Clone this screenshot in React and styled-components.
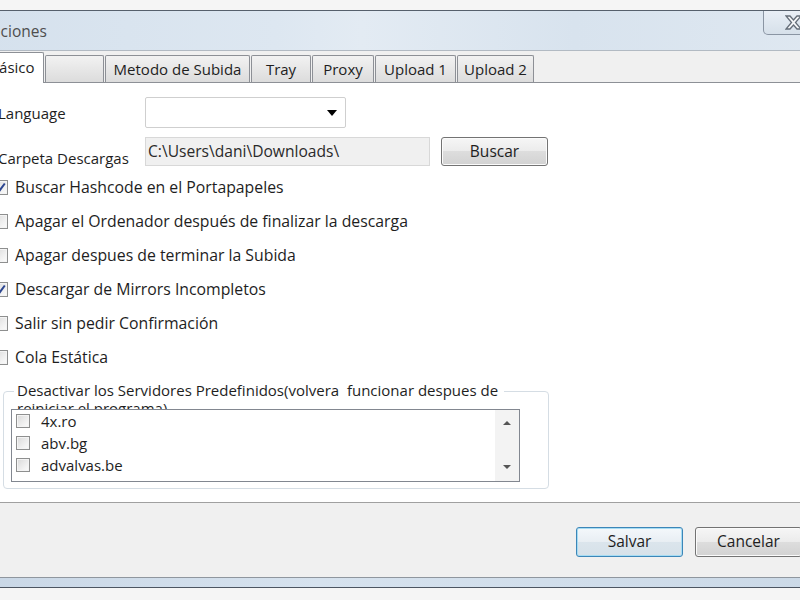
import React from 'react';
import styled, { createGlobalStyle } from 'styled-components';

const GlobalStyle = createGlobalStyle`
  html, body {
    margin: 0;
    padding: 0;
    overflow: hidden;
    background: #f6f6f6;
  }
  body {
    font-family: 'Open Sans', 'Noto Sans', sans-serif;
    font-size: 15px;
    color: #1e1e1e;
  }
`;

const Screen = styled.div`
  width: 800px;
  height: 600px;
  overflow: hidden;
  padding-top: 10px;
  box-sizing: border-box;
  background: #f5f5f5;
`;

const Window = styled.div`
  margin: 0 -30px 0 -22px;
  border-top: 1px solid #56606c;
  display: flex;
  flex-direction: column;
`;

const TitleBar = styled.div`
  height: 39px;
  display: flex;
  justify-content: space-between;
  align-items: flex-start;
  background: linear-gradient(to right, #d5e1ed, #dde7f1 35%, #e3ebf3 45%, #d8e3ee 70%, #dfe8f1);
  border-bottom: 1px solid #b2bac3;
`;

const Title = styled.div`
  padding-left: 1px;
  line-height: 40px;
  font-size: 15.5px;
  color: #4e4e4e;
`;

const CloseButton = styled.div`
  width: 60px;
  height: 24px;
  margin-right: 7px;
  box-sizing: border-box;
  border: 1px solid #8a95a3;
  border-top: none;
  border-radius: 0 0 5px 5px;
  background: linear-gradient(#e9eff6, #d6e0ea);
  display: flex;
  align-items: center;
  justify-content: center;
`;

const Client = styled.div`
  background: #f0f0f0;
`;

const TabStrip = styled.div`
  position: relative;
  z-index: 1;
  height: 31px;
  display: flex;
  align-items: flex-end;
  padding-left: 2px;
`;

const Tab = styled.div`
  box-sizing: border-box;
  width: ${p => p.$w}px;
  height: ${p => (p.$active ? 31 : 27)}px;
  margin-left: ${p => (p.$first ? 0 : 1)}px;
  margin-bottom: ${p => (p.$active ? -1 : 0)}px;
  border: 1px solid #8d9096;
  border-bottom: none;
  border-radius: 2px 2px 0 0;
  background: ${p => (p.$active ? '#ffffff' : 'linear-gradient(#f2f2f2, #e7e7e7 50%, #dcdcdc)')};
  display: flex;
  align-items: center;
  justify-content: center;
  padding-bottom: ${p => (p.$active ? 2 : 0)}px;
  white-space: nowrap;
`;

const Panel = styled.div`
  box-sizing: border-box;
  height: 421px;
  background: #ffffff;
  border-top: 1px solid #8d9096;
  border-bottom: 1px solid #a0a0a0;
  padding: 14px 0 0 15px;
`;

const Row = styled.div`
  display: flex;
  align-items: ${p => p.$align || 'center'};
  height: ${p => p.$h}px;
  margin-top: ${p => p.$mt || 0}px;
`;

const FieldLabel = styled.div`
  width: 147px;
  flex-shrink: 0;
  margin-left: 5px;
  line-height: 20px;
  margin-bottom: ${p => p.$mb || 0}px;
`;

const Combo = styled.div`
  width: 201px;
  height: 31px;
  box-sizing: border-box;
  border: 1px solid #cfcfcf;
  border-radius: 2px;
  background: #fff;
  display: flex;
  align-items: center;
  justify-content: flex-end;
  padding-right: 8px;
`;

const ComboArrow = styled.span`
  width: 0;
  height: 0;
  border-left: 5px solid transparent;
  border-right: 5px solid transparent;
  border-top: 6px solid #000;
`;

const PathInput = styled.div`
  width: 285px;
  height: 29px;
  box-sizing: border-box;
  border: 1px solid #d8d8d8;
  background: #f0f0f0;
  padding-left: 2px;
  display: flex;
  align-items: center;
  padding-bottom: 2px;
  font-size: 15.6px;
  color: #2a2a2a;
`;

const Button = styled.button`
  width: 107px;
  height: ${p => p.$h || 30}px;
  margin-left: ${p => p.$ml || 0}px;
  box-sizing: border-box;
  border: 1px solid ${p => (p.$primary ? '#3c86b8' : '#737373')};
  border-radius: 3px;
  background: ${p => (p.$primary
    ? 'linear-gradient(#f4f8fb, #e8eef3 50%, #dbe5ec 50%, #d6e1e9)'
    : 'linear-gradient(#f6f6f6, #ebebeb 50%, #dddddd 50%, #d2d2d2)')};
  box-shadow: ${p => (p.$primary ? 'inset 0 0 0 1px #a6dcf3' : 'inset 0 0 0 1px #fbfbfb')};
  font-family: 'Open Sans', 'Noto Sans', sans-serif;
  font-size: 15.5px;
  color: #1e1e1e;
  padding: 0 0 2px;
`;

const CheckList = styled.div`
  margin-top: 4px;
  display: flex;
  flex-direction: column;
`;

const CheckRow = styled.div`
  height: 34px;
  display: flex;
  align-items: center;
  gap: 7px;
  font-size: 15.8px;
`;

const Box = styled.span`
  width: ${p => p.$size}px;
  height: ${p => p.$size}px;
  box-sizing: border-box;
  flex-shrink: 0;
  border: 1px solid #8e8f8f;
  background: linear-gradient(135deg, #d9d9d9, #f3f3f3 70%, #fbfbfb);
  box-shadow: inset 0 0 0 1px #f4f4f4;
  display: flex;
  align-items: center;
  justify-content: center;
`;

const GroupBox = styled.div`
  margin: 17px 0 0 10px;
  width: 546px;
  box-sizing: border-box;
  border: 1px solid #d5dde4;
  border-radius: 4px;
  padding: 0 0 6px 7px;
`;

const Legend = styled.div`
  margin: -11px 0 0 3px;
  padding: 0 3px;
  width: 484px;
  height: 28px;
  overflow: hidden;
  background: #fff;
  line-height: 18px;
  white-space: pre-wrap;
`;

const ListBox = styled.div`
  width: 509px;
  height: 73px;
  box-sizing: border-box;
  border: 1px solid #828790;
  display: flex;
  background: #fff;
`;

const Items = styled.div`
  flex: 1;
  display: flex;
  flex-direction: column;
`;

const Item = styled.div`
  height: 22px;
  display: flex;
  align-items: center;
  padding-left: 4px;
  gap: 11px;
`;

const ScrollBar = styled.div`
  width: 24px;
  background: #f3f3f3;
  display: flex;
  flex-direction: column;
  align-items: center;
  justify-content: space-between;
  padding: 11px 0 12px;
  box-sizing: border-box;
`;

const ScrollArrow = styled.span`
  width: 0;
  height: 0;
  border-left: 4px solid transparent;
  border-right: 4px solid transparent;
  ${p => (p.$up ? 'border-bottom: 4px solid #555;' : 'border-top: 4px solid #555;')}
`;

const Footer = styled.div`
  height: 74px;
  display: flex;
  justify-content: flex-end;
  align-items: flex-start;
  padding: 24px 28px 0 0;
  box-sizing: border-box;
`;

const BottomFrame = styled.div`
  height: 11px;
  box-sizing: border-box;
  border-top: 1px solid #8f969e;
  border-bottom: 1px solid #4c5561;
  background: linear-gradient(to right, #c9d7e6, #d6e2ee 40%, #cbd9e7);
`;

const Check = () => (
  <svg width="11" height="11" viewBox="0 0 11 11">
    <path d="M1.5 6 L4.3 9 L9.8 1.5" fill="none" stroke="#2c4690" strokeWidth="2" />
  </svg>
);

const CloseGlyph = () => (
  <svg width="17" height="15" viewBox="0 0 17 15">
    <polygon
      points="1,1 5,1 8.5,5 12,1 16,1 10.5,7.5 16,14 12,14 8.5,10 5,14 1,14 6.5,7.5"
      fill="#f4f6f8"
      stroke="#646d78"
      strokeWidth="1.3"
    />
  </svg>
);

const CheckBox = ({ size, checked }) => (
  <Box $size={size}>{checked && <Check />}</Box>
);

const tabs = [
  { label: 'Básico', w: 64, active: true },
  { label: '', w: 59 },
  { label: 'Metodo de Subida', w: 145 },
  { label: 'Tray', w: 60 },
  { label: 'Proxy', w: 62 },
  { label: 'Upload 1', w: 81 },
  { label: 'Upload 2', w: 77 },
];

const options = [
  { label: 'Buscar Hashcode en el Portapapeles', checked: true },
  { label: 'Apagar el Ordenador después de finalizar la descarga' },
  { label: 'Apagar despues de terminar la Subida' },
  { label: 'Descargar de Mirrors Incompletos', checked: true },
  { label: 'Salir sin pedir Confirmación' },
  { label: 'Cola Estática' },
];

const servers = ['4x.ro', 'abv.bg', 'advalvas.be'];

export default function App() {
  return (
    <Screen>
      <GlobalStyle />
      <Window>
        <TitleBar>
          <Title>Opciones</Title>
          <CloseButton><CloseGlyph /></CloseButton>
        </TitleBar>
        <Client>
          <TabStrip>
            {tabs.map((t, i) => (
              <Tab key={i} $w={t.w} $active={t.active} $first={i === 0}>{t.label}</Tab>
            ))}
          </TabStrip>
          <Panel>
            <Row $h={31}>
              <FieldLabel>Language</FieldLabel>
              <Combo><ComboArrow /></Combo>
            </Row>
            <Row $h={29} $mt={9} $align="flex-end">
              <FieldLabel $mb={-2}>Carpeta Descargas</FieldLabel>
              <PathInput>C:\Users\dani\Downloads\</PathInput>
              <Button $ml={11} $h={29}>Buscar</Button>
            </Row>
            <CheckList>
              {options.map(o => (
                <CheckRow key={o.label}>
                  <CheckBox size={15} checked={o.checked} />
                  <span>{o.label}</span>
                </CheckRow>
              ))}
            </CheckList>
            <GroupBox>
              <Legend>{'Desactivar los Servidores Predefinidos(volvera  funcionar despues de reiniciar el programa)'}</Legend>
              <ListBox>
                <Items>
                  {servers.map(s => (
                    <Item key={s}>
                      <CheckBox size={14} />
                      <span>{s}</span>
                    </Item>
                  ))}
                </Items>
                <ScrollBar>
                  <ScrollArrow $up />
                  <ScrollArrow />
                </ScrollBar>
              </ListBox>
            </GroupBox>
          </Panel>
          <Footer>
            <Button $primary>Salvar</Button>
            <Button $ml={12}>Cancelar</Button>
          </Footer>
        </Client>
        <BottomFrame />
      </Window>
    </Screen>
  );
}
